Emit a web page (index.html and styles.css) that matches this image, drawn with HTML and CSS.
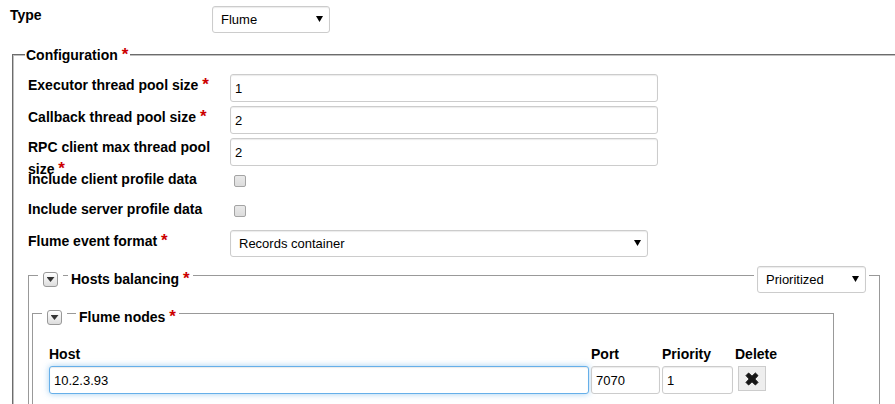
FILE: index.html
```html
<!DOCTYPE html>
<html lang="en">
<head>
<meta charset="utf-8">
<title>Flume configuration</title>
<link rel="stylesheet" href="styles.css">
</head>
<body>
<form class="page">
  <div class="type-row">
    <label class="label" for="type">Type</label>
    <span class="select type-select"><select id="type"><option>Flume</option></select></span>
  </div>
  <fieldset class="config">
    <legend>Configuration <b class="req">*</b></legend>
    <div class="rows">
      <div class="row">
        <label class="label" for="executor">Executor thread pool size <b class="req">*</b></label>
        <input class="text field" id="executor" type="text" value="1">
      </div>
      <div class="row">
        <label class="label" for="callback">Callback thread pool size <b class="req">*</b></label>
        <input class="text field" id="callback" type="text" value="2">
      </div>
      <div class="row">
        <label class="label" for="rpc">RPC client max thread pool size <b class="req">*</b></label>
        <input class="text field" id="rpc" type="text" value="2">
      </div>
      <div class="row short">
        <label class="label" for="client">Include client profile data</label>
        <input class="check" id="client" type="checkbox">
      </div>
      <div class="row short">
        <label class="label" for="server">Include server profile data</label>
        <input class="check" id="server" type="checkbox">
      </div>
      <div class="row">
        <label class="label" for="format">Flume event format <b class="req">*</b></label>
        <span class="select format-select"><select id="format"><option>Records container</option></select></span>
      </div>
    </div>
    <section class="group hosts">
      <div class="group-head">
        <span class="mask"><button class="toggle" type="button" aria-label="Toggle hosts balancing"></button></span>
        <label class="group-title" for="balancing">Hosts balancing <b class="req">*</b></label>
        <span class="mask mode"><span class="select mode-select"><select id="balancing"><option>Prioritized</option></select></span></span>
      </div>
      <section class="group nodes">
        <div class="group-head">
          <span class="mask"><button class="toggle" type="button" aria-label="Toggle Flume nodes"></button></span>
          <span class="group-title">Flume nodes <b class="req">*</b></span>
        </div>
        <table class="node-table">
          <thead>
            <tr><th id="h-host">Host</th><th class="port" id="h-port">Port</th><th class="priority" id="h-priority">Priority</th><th class="delete">Delete</th></tr>
          </thead>
          <tbody>
            <tr>
              <td><input class="text active" type="text" value="10.2.3.93" aria-labelledby="h-host"></td>
              <td><input class="text" type="text" value="7070" aria-labelledby="h-port"></td>
              <td><input class="text" type="text" value="1" aria-labelledby="h-priority"></td>
              <td class="delete-cell"><button class="remove" type="button" aria-label="Delete"><svg width="14" height="14" viewBox="0 0 14 14" aria-hidden="true"><path d="M3.6 1 7 4.2 10.4 1 13 3.6 9.8 7 13 10.4 10.4 13 7 9.8 3.6 13 1 10.4 4.2 7 1 3.6Z" fill="#151515" stroke="#151515" stroke-width="1" stroke-linejoin="round"/></svg></button></td>
            </tr>
          </tbody>
        </table>
      </section>
    </section>
  </fieldset>
</form>
</body>
</html>
```
FILE: styles.css
```css
* { box-sizing: border-box; }

body {
  margin: 0;
  overflow: hidden;
  background: #fff;
  color: #000;
  font: 14px/20px "Liberation Sans", Arial, sans-serif;
}

input, select, button { margin: 0; font: 13px/20px "Liberation Sans", Arial, sans-serif; color: #000; }

.label, legend, .group-title, th { font-weight: bold; }
.req { color: #c00; font-size: 17px; line-height: 22px; }
.label .req { line-height: 24px; }

.type-row { display: flex; padding: 6px 0 0 10px; }
.type-row .label { width: 202px; margin-top: -1px; }

.select { position: relative; display: block; }
.select::after {
  content: "";
  position: absolute;
  right: 7px;
  top: 10px;
  width: 7px;
  height: 6px;
  background: #000;
  clip-path: polygon(0 0, 100% 0, 50% 100%);
  pointer-events: none;
}
.select select {
  display: block;
  width: 100%;
  height: 27px;
  padding: 0 20px 0 8px;
  appearance: none;
  border: 1px solid #ccc;
  border-radius: 3px;
  background: #fff;
  box-shadow: inset 0 1px 1px rgba(0, 0, 0, 0.08);
}
.type-select { width: 118px; }
.format-select { width: 418px; margin-top: 1px; }
.mode-select { width: 109px; }

.config {
  min-width: 0;
  margin: 11px 0 0 12px;
  padding: 0 0 0 11px;
  border: 2px groove #c0c0c0;
  border-width: 2px 0 0 2px;
}
legend { padding: 0 2px 0 1px; }

.rows { padding: 7px 0 0 3px; }
.row { display: flex; height: 32px; }
.row .label { flex: none; width: 190px; margin-right: 12px; }
.row.short { height: 30px; }

.text {
  display: block;
  width: 100%;
  height: 28px;
  padding: 0 4px;
  border: 1px solid #ccc;
  border-radius: 3px;
  background: #fff;
  box-shadow: inset 0 1px 1px rgba(0, 0, 0, 0.08);
}
.text.field { width: 428px; margin-top: 1px; }
.text.active {
  border-color: #66afe9;
  box-shadow: inset 0 1px 1px rgba(0, 0, 0, 0.08), 0 0 6px rgba(102, 175, 233, 0.6);
}

.check {
  width: 12px;
  height: 12px;
  margin: 6px 0 0 4px;
  appearance: none;
  border: 1px solid #a4a4a4;
  border-radius: 2px;
  background: linear-gradient(#e9e9e9, #dcdcdc);
}

.group { border: 1px solid #999; border-bottom: 0; }
.hosts { margin: 14px 15px 0 3px; }
.nodes { margin: 20px 45px 0 3px; padding: 0 55px 20px 16px; }

.group-head { display: flex; align-items: center; height: 27px; margin-top: -10px; }
.hosts > .group-head { padding: 0 10px 0 9px; gap: 5px; }
.nodes > .group-head { margin-left: -7px; margin-right: -55px; gap: 9px; }
.mask { display: block; padding: 0 5px; background: #fff; }
.mask.mode { margin-left: auto; padding: 0 3px; }
.group-title { padding: 0 3px 2px; background: #fff; }

.toggle {
  display: flex;
  align-items: center;
  justify-content: center;
  width: 15px;
  height: 15px;
  padding: 0;
  border: 1px solid #999;
  border-radius: 3px;
  background: linear-gradient(#fff, #ddd);
}
.toggle::before {
  content: "";
  width: 8px;
  height: 5px;
  background: #333;
  clip-path: polygon(0 0, 100% 0, 50% 100%);
}

.node-table { width: 100%; margin-top: 13px; border-collapse: collapse; table-layout: fixed; }
.node-table th { height: 22px; padding: 0; text-align: left; vertical-align: top; }
.node-table td { padding: 0 2px 0 0; vertical-align: top; }
.node-table .port { width: 71px; }
.node-table .priority { width: 73px; }
.node-table .delete { width: 43px; }
.node-table .delete-cell { padding: 0 0 0 3px; }

.remove {
  display: flex;
  align-items: center;
  justify-content: center;
  width: 28px;
  height: 25px;
  padding: 0;
  border: 1px solid #ccc;
  background: #eee;
}
```
